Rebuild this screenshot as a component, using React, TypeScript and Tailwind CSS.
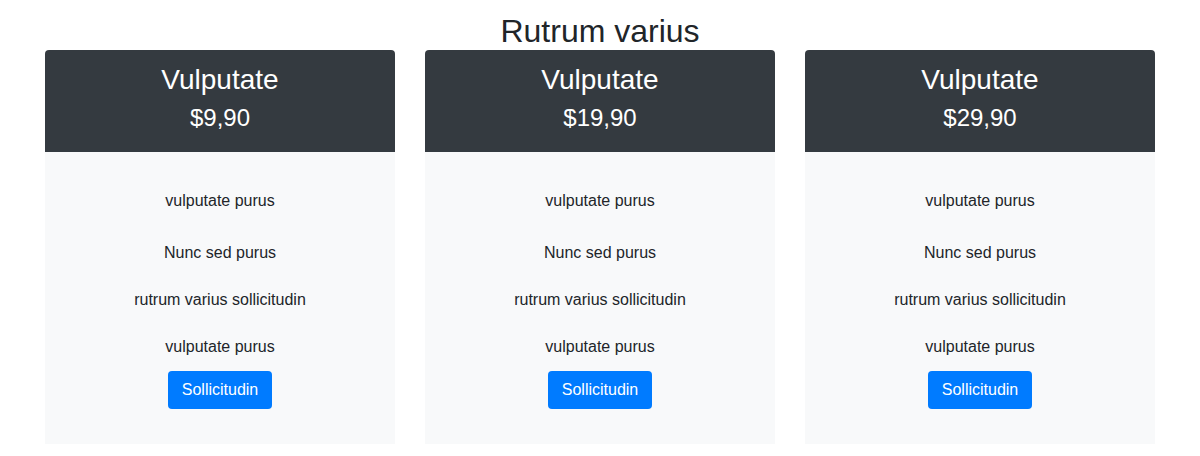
const plans = [
  { name: "Vulputate", price: "$9,90" },
  { name: "Vulputate", price: "$19,90" },
  { name: "Vulputate", price: "$29,90" },
];

function PlanCard({ name, price }: { name: string; price: string }) {
  return (
    <div className="flex w-[350px] flex-col">
      <div className="rounded-t bg-[#343a40] pt-[13px] pb-[20px] text-center text-white">
        <h3 className="text-[28px] leading-[34px]">{name}</h3>
        <div className="mt-[6px] text-2xl leading-[29px]">{price}</div>
      </div>
      <div className="flex flex-col items-center bg-[#f8f9fa] pt-[37px] pb-[35px] text-base leading-6 text-[#212529]">
        <p className="mb-7">vulputate purus</p>
        <p className="mb-[23px]">Nunc sed purus</p>
        <p className="mb-[23px]">rutrum varius sollicitudin</p>
        <p className="mb-3">vulputate purus</p>
        <button className="h-[38px] rounded bg-[#007bff] px-[14px] text-base leading-6 text-white">
          Sollicitudin
        </button>
      </div>
    </div>
  );
}

export default function App() {
  return (
    <div className="min-h-[456px] bg-white font-['Liberation_Sans',Arial,sans-serif] text-[#212529]">
      <h2 className="pt-3 text-center text-[32px] leading-[38px]">Rutrum varius</h2>
      <div className="mx-auto flex w-[1110px] gap-[30px]">
        {plans.map((plan) => (
          <PlanCard key={plan.price} name={plan.name} price={plan.price} />
        ))}
      </div>
    </div>
  );
}
